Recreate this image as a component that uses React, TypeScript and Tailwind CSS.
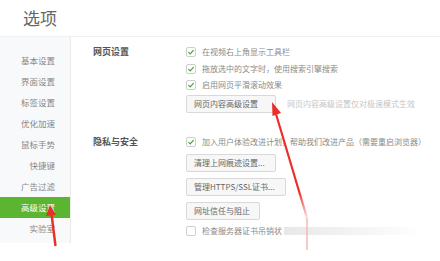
const FONT = "font-['Microsoft_YaHei','Noto_Sans_CJK_SC',sans-serif]";

const MENU = ['基本设置', '界面设置', '标签设置', '优化加速', '鼠标手势', '快捷键', '广告过滤', '高级设置', '实验室'];

function Check({ on }: { on: boolean }) {
  return (
    <span className="flex h-[10px] w-[10px] shrink-0 items-center justify-center rounded-[2px] border border-[#cfcfcf] bg-white">
      {on && (
        <svg viewBox="0 0 10 10" className="h-[8px] w-[8px]">
          <path d="M1.8 5.2 L4 7.3 L8.3 2.6" fill="none" stroke="#45a83a" strokeWidth="1.6" />
        </svg>
      )}
    </span>
  );
}

function Row({ on, text }: { on: boolean; text: string }) {
  return (
    <div className="flex h-[16.5px] items-center gap-[6px]">
      <Check on={on} />
      <span className="text-[#8a8a8a]">{text}</span>
    </div>
  );
}

function Btn({ children, w }: { children: string; w: string }) {
  return (
    <div
      className={`flex h-[18px] items-center rounded-[2px] border border-[#d9d9d9] bg-[#f7f7f7] pl-[7px] text-[#666] ${w}`}
    >
      {children}
    </div>
  );
}

export default function App() {
  return (
    <div className={`relative h-[261px] w-[440px] overflow-hidden bg-white ${FONT}`}>
      <header className="flex h-[37px] items-center border-b border-[#f0f0f0] pl-[23px] text-[17px] text-[#666]">
        选项
      </header>
      <div className="flex h-[206px]">
        <nav className="w-[71px] shrink-0 border-r border-[#ebebeb] bg-[#f8f9fa] pt-[13px] text-[8.5px] text-[#888]">
          {MENU.map((m) => (
            <div
              key={m}
              className={`flex h-[21px] items-center justify-end pr-[15px] ${
                m === '高级设置' ? 'bg-[#5cb531] text-white' : ''
              }`}
            >
              {m}
            </div>
          ))}
        </nav>
        <main className="flex-1 pl-[22px] pt-[7px] text-[8px]">
          <section className="flex">
            <h3 className="h-[16.5px] w-[93px] text-[9px] font-bold leading-[16.5px] text-[#555]">网页设置</h3>
            <div className="flex flex-col">
              <Row on text="在视频右上角显示工具栏" />
              <Row on text="拖放选中的文字时，使用搜索引擎搜索" />
              <Row on text="启用网页平滑滚动效果" />
              <div className="mt-[1px] flex items-center gap-[11px]">
                <Btn w="w-[90px]">网页内容高级设置</Btn>
                <span className="text-[#c6c6c6]">网页内容高级设置仅对极速模式生效</span>
              </div>
            </div>
          </section>
          <section className="mt-[21px] flex">
            <h3 className="h-[16.5px] w-[93px] text-[9px] font-bold leading-[16.5px] text-[#555]">隐私与安全</h3>
            <div className="flex flex-col">
              <Row on text="加入用户体验改进计划，帮助我们改进产品（需要重启浏览器）" />
              <div className="mt-[4px] flex flex-col gap-[6px]">
                <Btn w="w-[90px]">清理上网痕迹设置...</Btn>
                <Btn w="w-[100px]">管理HTTPS/SSL证书...</Btn>
                <Btn w="w-[74px]">网址信任与阻止</Btn>
              </div>
              <div className="mt-[3px] flex items-center">
                <Row on={false} text="检查服务器证书吊销状" />
                <span className="ml-[2px] h-[8px] w-[140px] bg-gradient-to-r from-[#e8e8e8] to-white" />
              </div>
            </div>
          </section>
        </main>
      </div>
      {/* red annotation arrows drawn over the screenshot */}
      <svg className="pointer-events-none absolute inset-0" width="440" height="261" viewBox="0 0 440 261">
        <defs>
          <linearGradient id="fade" x1="0" y1="0" x2="0" y2="1">
            <stop offset="0.75" stopColor="#e8302a" />
            <stop offset="1" stopColor="#e8302a" stopOpacity="0.15" />
          </linearGradient>
        </defs>
        <line x1="276" y1="114" x2="307" y2="218" stroke="url(#fade)" strokeWidth="2.2" />
        <line x1="307" y1="218" x2="307" y2="250" stroke="#f3b8b5" strokeWidth="1.5" />
        <polygon points="272,102 272.5,116 281,113" fill="#e8302a" />
        <line x1="51.5" y1="214" x2="55.5" y2="246" stroke="#e8302a" strokeWidth="2.4" />
        <polygon points="50,205 46,216 56,215" fill="#e8302a" />
      </svg>
    </div>
  );
}
